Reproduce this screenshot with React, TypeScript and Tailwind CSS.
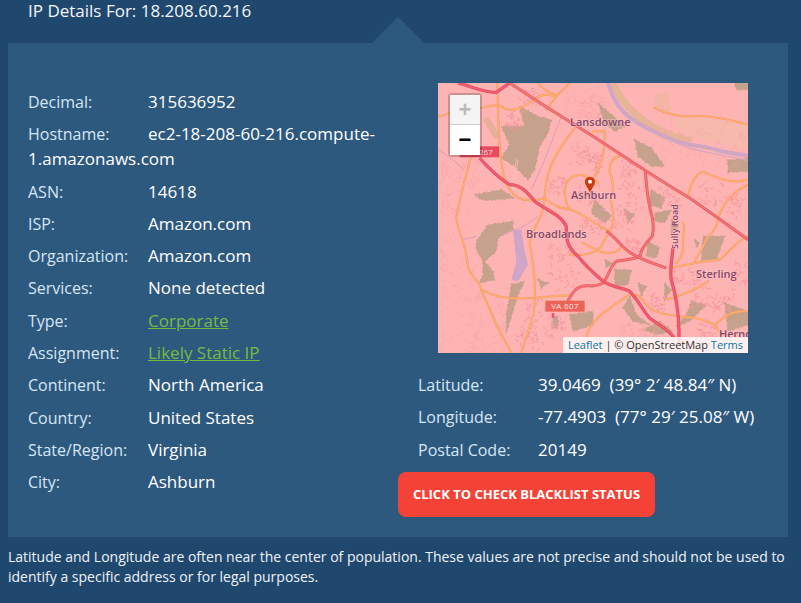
const font = { fontFamily: '"Open Sans", sans-serif' }

const leftRows: { label: string; value: string; link?: boolean }[] = [
  { label: "Decimal:", value: "315636952" },
  { label: "Hostname:", value: "ec2-18-208-60-216.compute-1.amazonaws.com" },
  { label: "ASN:", value: "14618" },
  { label: "ISP:", value: "Amazon.com" },
  { label: "Organization:", value: "Amazon.com" },
  { label: "Services:", value: "None detected" },
  { label: "Type:", value: "Corporate", link: true },
  { label: "Assignment:", value: "Likely Static IP", link: true },
  { label: "Continent:", value: "North America" },
  { label: "Country:", value: "United States" },
  { label: "State/Region:", value: "Virginia" },
  { label: "City:", value: "Ashburn" },
]

const rightRows = [
  { label: "Latitude:", value: "39.0469  (39° 2′ 48.84″ N)" },
  { label: "Longitude:", value: "-77.4903  (77° 29′ 25.08″ W)" },
  { label: "Postal Code:", value: "20149" },
]

function Row({ label, value, link }: { label: string; value: string; link?: boolean }) {
  return (
    <div className="mb-[7.3px] text-[17px] leading-[25px] whitespace-pre-wrap">
      <span className="inline-block align-top w-[120px] h-[25px] pt-px text-[16px] text-[#d5e6f5]">{label}</span>
      {link ? <a className="text-[#74bb42] underline">{value}</a> : <span className="text-white">{value}</span>}
    </div>
  )
}

// map coords are 3x the map's own pixels
const patches = [
  "M245 70 L300 100 L340 110 L330 150 L305 190 L290 260 L270 290 L230 250 L190 225 L215 185 L190 130 L260 130 L250 95 Z",
  "M110 335 L190 320 L230 345 L160 352 L130 350 Z",
  "M115 475 L150 425 L225 415 L225 440 L180 465 L175 505 L140 535 L165 565 L170 590 L125 600 L135 575 L135 535 L115 500 Z",
  "M220 605 L260 595 L240 635 L205 750 L205 695 Z",
  "M860 660 L930 685 L930 725 L870 745 Z",
  "M530 560 L580 560 L570 605 L530 610 Z",
  "M630 475 L665 495 L655 525 L625 520 Z",
  "M500 530 L525 540 L505 555 Z",
  "M795 460 L860 460 L835 530 L790 535 Z",
  "M760 655 L805 665 L755 715 L715 730 L745 695 Z",
  "M575 640 L595 695 L635 725 L585 715 L555 675 Z",
  "M665 715 L705 745 L655 755 L615 740 Z",
  "M345 700 L360 700 L360 735 L345 735 Z",
  "M395 695 L465 685 L465 725 L405 745 Z",
  "M535 780 L590 770 L610 795 L530 800 Z",
  "M640 320 L680 345 L670 375 L630 365 Z",
  "M480 60 L515 90 L560 130 L530 145 L500 120 Z",
  "M590 170 L640 195 L680 250 L640 250 L600 220 Z",
  "M650 390 L700 380 L680 420 L650 415 Z",
  "M470 350 L520 400 L500 420 L460 390 Z",
  "M890 0 L930 0 L930 20 L895 20 Z",
  "M870 232 L930 225 L930 265 L870 268 Z",
  "M770 470 L785 480 L775 495 Z",
  "M600 600 L625 610 L610 640 Z",
  "M680 600 L700 620 L680 650 Z",
  "M300 590 L330 600 L310 615 Z",
  "M560 380 L590 395 L570 420 Z",
  "M700 410 L720 430 L700 450 Z",
]

const orange = [
  "M178 0 C180 60 180 130 185 180 C188 240 195 290 215 320 C235 350 270 360 320 345 C340 360 355 375 400 380 C440 395 480 430 516 446",
  "M100 215 C85 280 65 340 55 405 C60 450 85 480 90 555 C105 590 120 590 125 605 C135 640 145 650 160 690 C175 730 200 770 220 810",
  "M130 620 C170 640 200 650 290 645 C330 640 370 640 400 635",
  "M410 135 C370 190 325 240 320 340 C320 400 285 430 275 480 C290 560 295 640 286 696 L250 810",
  "M300 0 C325 30 355 35 355 40 L325 80 M355 40 L395 0",
  "M0 100 C30 100 50 75 80 70 M130 75 C150 70 170 62 190 70 C220 95 260 70 290 50 C310 30 330 35 355 40",
  "M465 145 L500 145 L500 180 C495 220 490 250 470 280",
  "M440 278 C410 270 385 285 380 320 C380 350 385 370 400 380 M440 278 C455 282 470 290 480 300",
  "M545 220 C525 222 515 235 515 265 C525 300 530 310 518 345 C520 370 530 395 525 420 C520 450 500 460 490 490 C470 515 420 520 395 515",
  "M435 480 C470 495 490 515 520 510 C545 505 555 490 545 480",
  "M695 555 C730 550 780 535 845 530 C880 500 900 470 930 460",
  "M750 345 C755 300 780 262 800 268 C830 280 860 298 905 295 L930 290",
  "M840 405 C860 350 890 325 930 305 M840 405 C840 440 815 450 805 470 C790 500 780 520 770 535",
  "M735 420 C745 440 730 460 735 495 C735 515 725 530 715 540",
  "M685 650 C720 640 770 625 810 595",
  "M446 760 C455 710 510 680 575 635 C595 630 610 640 625 665 C650 690 680 695 725 700 C770 702 805 710 830 725 L850 755",
  "M830 725 C860 700 885 680 930 685",
  "M650 75 C680 90 710 100 750 100 C810 95 880 110 930 125",
]

const red = [
  "M60 0 C100 10 140 30 175 28 L215 0",
  "M125 225 C150 255 190 290 215 305 C250 305 270 330 290 355 C320 380 370 395 385 430 C385 470 385 490 420 520 C440 545 460 565 490 590 C520 615 560 615 575 625 C600 650 620 690 635 705 C660 725 680 730 710 765",
  "M705 495 C700 540 695 570 700 590 C715 640 722 680 723 745 L723 790",
]

const salmon = [
  "M215 0 L330 75 L465 160 L625 265 L705 315 L755 345 L840 405 L930 470",
  "M622 265 C625 310 630 360 643 405 C648 430 645 450 643 460 C630 475 615 485 605 520 C590 530 560 530 535 535 C515 550 510 585 495 600 C470 615 450 605 430 610 C410 615 395 640 382 670",
  "M505 445 C530 460 550 490 565 500 C585 520 640 540 685 555",
]

const clusters = [
  [195, 85, 60, 50], [250, 20, 50, 40], [335, 275, 50, 60], [420, 305, 60, 60], [460, 215, 30, 50],
  [540, 300, 80, 80], [520, 380, 60, 60], [545, 240, 50, 40], [760, 590, 80, 80], [820, 640, 60, 50],
  [660, 320, 70, 50], [790, 300, 60, 80], [870, 340, 50, 70], [330, 480, 80, 60], [335, 560, 90, 60],
  [250, 650, 70, 120], [320, 700, 60, 60], [240, 745, 70, 50], [400, 190, 60, 50], [560, 470, 50, 50],
  [430, 400, 80, 60], [700, 560, 90, 50], [640, 640, 40, 40], [880, 540, 50, 100], [780, 720, 60, 50],
]

function makeStreets(list: number[][], n: number, len: number, seed: number) {
  let s = seed
  const rnd = () => {
    s = (s * 1664525 + 1013904223) % 4294967296
    return s / 4294967296
  }
  let d = ""
  list.forEach(([x, y, w, h]) => {
    for (let i = 0; i < n; i++) {
      const px = x + rnd() * w
      const py = y + rnd() * h
      const a = rnd() * 6.28
      d += `M${px.toFixed(0)} ${py.toFixed(0)} q${(Math.cos(a) * len).toFixed(0)} ${(Math.sin(a) * len).toFixed(0)} ${(Math.cos(a + 1) * len * 1.4).toFixed(0)} ${(Math.sin(a + 1) * len * 1.4).toFixed(0)} `
    }
  })
  return d
}

const denseStreets = makeStreets(clusters, 24, 9, 7)
const faintStreets = makeStreets([[0, 230, 110, 170], [0, 430, 120, 370], [90, 640, 120, 170], [650, 130, 280, 120], [560, 720, 120, 60], [380, 30, 120, 80]], 50, 16, 31)

function MapSketch() {
  return (
    <svg viewBox="0 0 930 810" className="block w-full h-full">
      <rect width="930" height="810" fill="#ffb4b4" />
      <path d="M705 105 L805 105 L930 125 L930 205 L765 165 L715 130 Z" fill="#f6b9ab" />
      <path d="M650 30 L690 30 L700 90 L650 72 Z" fill="#f5b5a5" />
      <path d="M525 0 C550 60 590 100 650 135 C690 155 720 165 760 175" fill="none" stroke="#e8b497" strokeWidth="22" />
      {patches.map((d) => (
        <path key={d} d={d} fill="#c6a18c" stroke="#c6a18c" strokeWidth="5" strokeDasharray="7 5 3 11" />
      ))}
      <path d={faintStreets} fill="none" stroke="#f7a0a4" strokeWidth="1.6" />
      <path d={denseStreets} fill="none" stroke="#f4959c" strokeWidth="2.6" />
      <path d="M225 440 L250 440 L260 505 L270 545 L240 595 L220 590 L235 535 Z" fill="#cfa6c8" />
      <path d="M510 0 C520 30 530 60 560 90 C590 120 640 145 715 175 C760 190 805 188 850 205 L930 218" fill="none" stroke="#cfa6c4" strokeWidth="12" />
      <path d="M715 178 C760 205 830 210 930 232" fill="none" stroke="#d8a8c0" strokeWidth="4" />
      <path d="M150 100 L190 160 L170 170 L135 110 Z" fill="#e8b098" />
      <path d="M370 100 C340 180 310 260 280 320 M190 455 C220 445 250 440 300 400 M0 200 C30 220 60 240 80 265 M75 470 L115 460 M490 380 C510 385 520 395 530 410" fill="none" stroke="#d8a0bc" strokeWidth="3" />
      <path d="M235 225 L220 340 M240 230 L226 340" fill="none" stroke="#ffc0bc" strokeWidth="2" />
      {orange.map((d) => (
        <g key={d}>
          <path d={d} fill="none" stroke="#f59a68" strokeWidth="6.5" strokeLinecap="round" />
          <path d={d} fill="none" stroke="#ffb070" strokeWidth="3.5" strokeLinecap="round" />
        </g>
      ))}
      {salmon.map((d) => (
        <g key={d}>
          <path d={d} fill="none" stroke="#e8596a" strokeWidth="9" />
          <path d={d} fill="none" stroke="#f4776f" strokeWidth="4.5" />
        </g>
      ))}
      {red.map((d) => (
        <g key={d}>
          <path d={d} fill="none" stroke="#e84d65" strokeWidth="10" />
          <path d={d} fill="none" stroke="#f0616c" strokeWidth="4.5" />
        </g>
      ))}
      <path d="M345 690 L345 705" stroke="#e8596a" strokeWidth="8" />
      <rect x="65" y="190" width="118" height="33" fill="#ea4a60" />
      <text x="123" y="215" fontSize="24" fill="#ffdede" style={font}>267</text>
      <rect x="322" y="653" width="118" height="33" fill="#ec6458" />
      <text x="381" y="679" fontSize="24" fill="#ffe6e0" textAnchor="middle" letterSpacing="1" style={font}>VA 607</text>
      <g fill="#84486a" fontSize="33" fontWeight="600" stroke="#ffcaca" strokeOpacity="0.6" strokeWidth="4" paintOrder="stroke" style={font}>
        <text x="396" y="130">Lansdowne</text>
        <text x="399" y="348">Ashburn</text>
        <text x="264" y="464">Broadlands</text>
        <text x="774" y="585">Sterling</text>
        <text x="843" y="764">Herndon</text>
        <text x="721" y="498" fontSize="27" transform="rotate(-90 721 498)">Sully Road</text>
      </g>
      <path d="M456 328 C449 314 441 306 441 296 C441 286 448 282 456 282 C464 282 471 286 471 296 C471 306 463 314 456 328 Z" fill="#c93a0c" />
      <circle cx="456" cy="296" r="6" fill="#fff" />
    </svg>
  )
}

export default function App() {
  return (
    <div className="w-[801px] h-[603px] overflow-hidden bg-[#20486f]" style={font}>
      <h2 className="pl-[28px] pt-0 h-[43px] text-[17px] leading-[22px] text-[#f2f6fa] relative">
        IP Details For: 18.208.60.216
        <span className="absolute left-[372px] top-[17px] w-0 h-0 border-x-[26px] border-x-transparent border-b-[26px] border-b-[#2e597f]" />
      </h2>
      <div className="mx-[8px] w-[780px] h-[494px] bg-[#2e597f] flex">
        <div className="w-[380px] pl-[20px] pt-[46px] shrink-0">
          {leftRows.map((r) => (
            <Row key={r.label} {...r} />
          ))}
        </div>
        <div className="pt-[40px] pl-[10px] flex-1">
          <div className="relative ml-[40px] w-[310px] h-[270px] overflow-hidden">
            <MapSketch />
            <div className="absolute left-[12px] top-[12px] w-[30px] rounded-[2px] shadow-[0_0_0_2px_rgba(0,0,0,0.2)]">
              <div className="h-[30px] bg-[#f4f4f4] text-[#bbbbbb] border-b border-[#ccc] flex items-center justify-center text-[22px] font-bold leading-none" style={{ fontFamily: '"Liberation Sans", sans-serif' }}>+</div>
              <div className="h-[30px] bg-white text-black flex items-center justify-center text-[22px] font-bold leading-none" style={{ fontFamily: '"Liberation Sans", sans-serif' }}>−</div>
            </div>
            <div className="absolute right-0 bottom-0 h-[16px] px-[5px] bg-white/80 text-[11px] leading-[16px] text-[#333] whitespace-nowrap">
              <span className="text-[#0078a8]">Leaflet</span> | © OpenStreetMap <span className="text-[#0078a8]">Terms</span>
            </div>
          </div>
          <div className="mt-[19px] pl-[20px]">
            {rightRows.map((r) => (
              <Row key={r.label} {...r} />
            ))}
          </div>
          <button className="mt-[3px] w-[257px] h-[45px] rounded-[8px] bg-[#f44336] text-white text-[13px] font-bold uppercase">
            Click to check blacklist status
          </button>
        </div>
      </div>
      <p className="mt-[10px] px-[8px] text-[14px] leading-[20px] text-[#eef3f8]">
        Latitude and Longitude are often near the center of population. These values are not precise and should not be used to identify a specific address or for legal purposes.
      </p>
    </div>
  )
}
